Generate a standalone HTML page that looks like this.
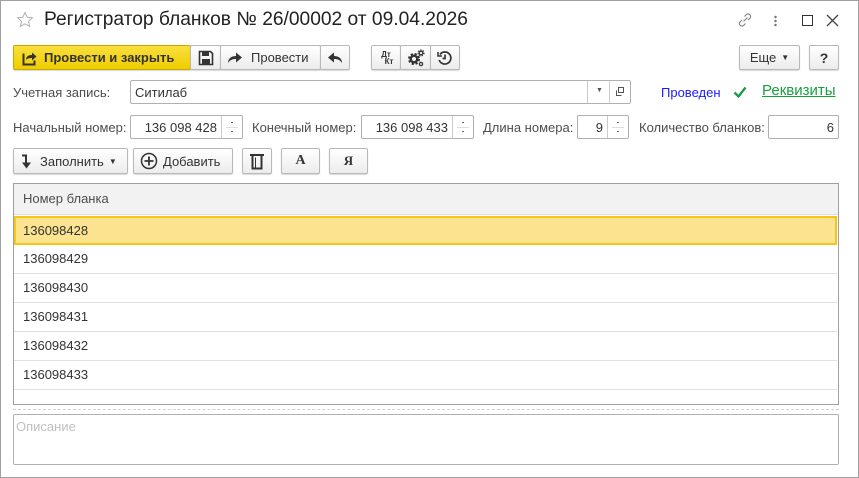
<!DOCTYPE html>
<html><head><meta charset="utf-8"><style>
*{box-sizing:border-box;margin:0;padding:0}
body{width:859px;height:478px;overflow:hidden;background:#fff;font-family:"Liberation Sans",Arial,sans-serif;font-size:13px;color:#333;position:relative}
.win{position:absolute;left:0;top:0;width:859px;height:478px;border:1px solid #a0a0a0}
.a{position:absolute}
.btn{position:absolute;height:25px;border:1px solid #b8b8b8;border-radius:2px;background:linear-gradient(#fff,#ececec);box-shadow:0 1px 1px rgba(0,0,0,.15);display:flex;align-items:center;justify-content:center;color:#333}
.inp{position:absolute;height:24px;border:1px solid #b0b0b0;border-radius:2px;background:#fff}
.lbl{position:absolute;color:#4d4d4d;font-size:13px}
.spin{position:absolute;right:0;top:0;width:21px;height:22px;border-left:1px solid #ccc}
.spin:before{content:"";position:absolute;left:9px;top:6px;width:2px;height:1px;background:#666}
.spin:after{content:"";position:absolute;left:9px;top:15px;width:2px;height:1px;background:#666}
.spin i{position:absolute;left:4px;right:4px;top:11px;height:1px;background:#ddd}
.row{position:absolute;left:14px;width:823px;height:29px;border-bottom:1px solid #e0e0e0;padding-left:9px;line-height:28px;color:#333;font-size:13px}
</style></head><body>
<div class="win"></div>
<svg class="a" style="left:16px;top:11px" width="18" height="18" viewBox="0 0 18 18"><path d="M9 1.5l2.2 4.8 5.2.5-3.9 3.5 1.1 5.1L9 12.8l-4.6 2.6 1.1-5.1L1.6 6.8l5.2-.5z" fill="none" stroke="#b0b0b0" stroke-width="1"/></svg>
<div class="a" style="left:44px;top:9px;font-size:19.2px;color:#222">Регистратор бланков № 26/00002 от 09.04.2026</div>
<svg class="a" style="left:736px;top:11px" width="18" height="18" viewBox="0 0 18 18" fill="none" stroke="#888" stroke-width="1.2"><path d="M7.5 10.5l4-4M6 9l-2 2a2.5 2.5 0 003.5 3.5l2-2M12 9l2-2a2.5 2.5 0 00-3.5-3.5l-2 2"/></svg>
<div class="a" style="left:774px;top:15px;width:3px;height:12px;background:radial-gradient(circle,#777 1.1px,transparent 1.4px) 0 0/3px 4px"></div>
<div class="a" style="left:802px;top:15px;width:11px;height:11px;border:1.5px solid #333"></div>
<svg class="a" style="left:826px;top:14px" width="13" height="13" viewBox="0 0 13 13" stroke="#444" stroke-width="1.3"><path d="M1 1l11 11M12 1L1 12"/></svg>

<div class="btn" style="left:13px;top:45px;width:178px;background:linear-gradient(#f9df3c,#f0cd00);border-color:#c9a800;justify-content:flex-start;padding-left:8px;font-weight:bold;color:#333">
<svg width="16" height="16" viewBox="0 0 16 16" style="margin-right:6px"><path d="M1.5 3.5v11h11v-4" fill="none" stroke="#333" stroke-width="2"/><path d="M4 10c0-4 3-5 6-5V2.5l4.5 4-4.5 4V8c-3 0-5 .5-6 2z" fill="#333"/></svg>Провести и закрыть</div>
<div class="btn" style="left:190px;top:45px;width:31px"><svg width="16" height="16" viewBox="0 0 16 16"><path d="M1.5 1.5h11l2 2v11h-13z" fill="none" stroke="#333" stroke-width="1.6"/><rect x="4" y="2" width="7" height="4" fill="#333"/><rect x="4" y="9" width="8" height="5" fill="#333"/></svg></div>
<div class="btn" style="left:220px;top:45px;width:101px;justify-content:flex-start;padding-left:6px"><svg width="16" height="14" viewBox="0 0 16 14" style="margin-right:8px"><path d="M1 12c0-5 4-7 8-7V1.5l6 5-6 5V8c-4 0-6 1-8 4z" fill="#333"/></svg>Провести</div>
<div class="btn" style="left:320px;top:45px;width:30px"><svg width="16" height="14" viewBox="0 0 16 14"><path d="M15 12c0-5-4-7-8-7V1.5l-6 5 6 5V8c4 0 6 1 8 4z" fill="#333"/></svg></div>
<div class="btn" style="left:371px;top:45px;width:30px;font-size:8px;font-weight:bold;line-height:7px;flex-direction:column">Дт<span style="margin-left:6px">Кт</span></div>
<div class="btn" style="left:400px;top:45px;width:31px"><svg width="18" height="18" viewBox="0 0 18 18" fill="none" stroke="#333"><circle cx="7" cy="10" r="3.3" stroke-width="2.4"/><circle cx="7" cy="10" r="5" stroke-width="2" stroke-dasharray="2.2 1.8"/><circle cx="14" cy="4" r="1.8" stroke-width="1.3"/><circle cx="14" cy="4" r="3" stroke-width="1.2" stroke-dasharray="1.3 1.3"/><circle cx="14" cy="15" r="1.6" stroke-width="1.3"/></svg></div>
<div class="btn" style="left:430px;top:45px;width:30px"><svg width="16" height="16" viewBox="0 0 16 16" fill="none" stroke="#333" stroke-width="1.7"><path d="M3 4.5A6 6 0 1 1 2.2 10"/><path d="M8 4.5V8.5H5.5"/><path d="M1 2v4h4" stroke-width="1.5"/></svg></div>
<div class="btn" style="left:739px;top:45px;width:61px">Еще <span style="font-size:8px;margin-left:5px">▼</span></div>
<div class="btn" style="left:809px;top:45px;width:30px;font-weight:bold;font-size:14px">?</div>

<div class="lbl" style="left:13px;top:85px">Учетная запись:</div>
<div class="inp" style="left:130px;top:80px;width:501px"><span class="a" style="left:4px;top:4px;color:#333">Ситилаб</span>
<div class="a" style="left:456px;top:0;width:1px;height:22px;background:#ccc"></div><span class="a" style="left:465px;top:6px;font-size:7px;color:#555">▼</span>
<div class="a" style="left:478px;top:0;width:1px;height:22px;background:#ccc"></div>
<svg class="a" style="left:483px;top:5px" width="11" height="11" viewBox="0 0 11 11" fill="none" stroke="#555"><rect x="4.5" y="1.5" width="5" height="5"/><path d="M2.5 4.5v5h5"/></svg></div>
<div class="a" style="left:661px;top:85px;color:#1a1aff">Проведен</div>
<svg class="a" style="left:733px;top:86px" width="14" height="12" viewBox="0 0 14 12"><path d="M1.5 6.5l4 4 7-9" fill="none" stroke="#1a9a4a" stroke-width="2.3"/></svg>
<div class="a" style="left:762px;top:82px;color:#16a040;font-size:15px;text-decoration:underline">Реквизиты</div>

<div class="lbl" style="left:13px;top:120px">Начальный номер:</div>
<div class="inp" style="left:130px;top:115px;width:113px"><span class="a" style="right:25px;top:4px">136 098 428</span><div class="spin"><i></i></div></div>
<div class="lbl" style="left:252px;top:120px">Конечный номер:</div>
<div class="inp" style="left:361px;top:115px;width:113px"><span class="a" style="right:25px;top:4px">136 098 433</span><div class="spin"><i></i></div></div>
<div class="lbl" style="left:483px;top:120px">Длина номера:</div>
<div class="inp" style="left:577px;top:115px;width:52px"><span class="a" style="right:25px;top:4px">9</span><div class="spin"><i></i></div></div>
<div class="lbl" style="left:639px;top:120px">Количество бланков:</div>
<div class="inp" style="left:768px;top:115px;width:71px"><span class="a" style="right:4px;top:4px">6</span></div>

<div class="btn" style="left:13px;top:148px;width:115px;height:26px;justify-content:flex-start;padding-left:8px"><svg width="10" height="16" viewBox="0 0 10 16" style="margin-right:8px"><path d="M0 1.5h5v8h4l-4.5 6L0 9.5h3V3.5H0z" fill="#333"/></svg>Заполнить <span style="font-size:8px;margin-left:5px">▼</span></div>
<div class="btn" style="left:133px;top:148px;width:100px;height:26px;justify-content:flex-start;padding-left:6px"><svg width="18" height="18" viewBox="0 0 18 18" style="margin-right:5px" fill="none" stroke="#333" stroke-width="1.5"><circle cx="9" cy="9" r="7.5"/><path d="M9 4.5v9M4.5 9h9" stroke-width="1.8"/></svg>Добавить</div>
<div class="btn" style="left:242px;top:148px;width:30px;height:26px"><svg width="14" height="17" viewBox="0 0 14 17" fill="none" stroke="#333" stroke-width="2"><path d="M0 2h14"/><path d="M2.5 3v12.5h9V3"/><path d="M5.5 4.5v10" stroke-width="1"/></svg></div>
<div class="btn" style="left:281px;top:148px;width:39px;height:26px;font-family:'Liberation Serif',serif;font-weight:bold;font-size:14px">A</div>
<div class="btn" style="left:329px;top:148px;width:39px;height:26px;font-family:'Liberation Serif',serif;font-weight:bold;font-size:13px">Я</div>

<div class="a" style="left:13px;top:183px;width:826px;height:222px;border:1px solid #a0a0a0"></div>
<div class="a" style="left:14px;top:184px;width:824px;height:31px;background:#f2f2f2;border-bottom:1px solid #ddd;padding-left:9px;line-height:30px;color:#4d4d4d">Номер бланка</div>
<div class="row" style="top:216px;background:#fbe38f;border:2px solid #f5c518;padding-left:7px;line-height:25px">136098428</div>
<div class="row" style="top:245px">136098429</div>
<div class="row" style="top:274px">136098430</div>
<div class="row" style="top:303px">136098431</div>
<div class="row" style="top:332px">136098432</div>
<div class="row" style="top:361px">136098433</div>

<div class="a" style="left:13px;top:409px;width:826px;border-top:1px dashed #d0d0d0"></div>
<div class="a" style="left:13px;top:414px;width:826px;height:51px;border:1px solid #b0b0b0;border-radius:2px;padding:4px 2px;color:#c0c0c0">Описание</div>
</body></html>
